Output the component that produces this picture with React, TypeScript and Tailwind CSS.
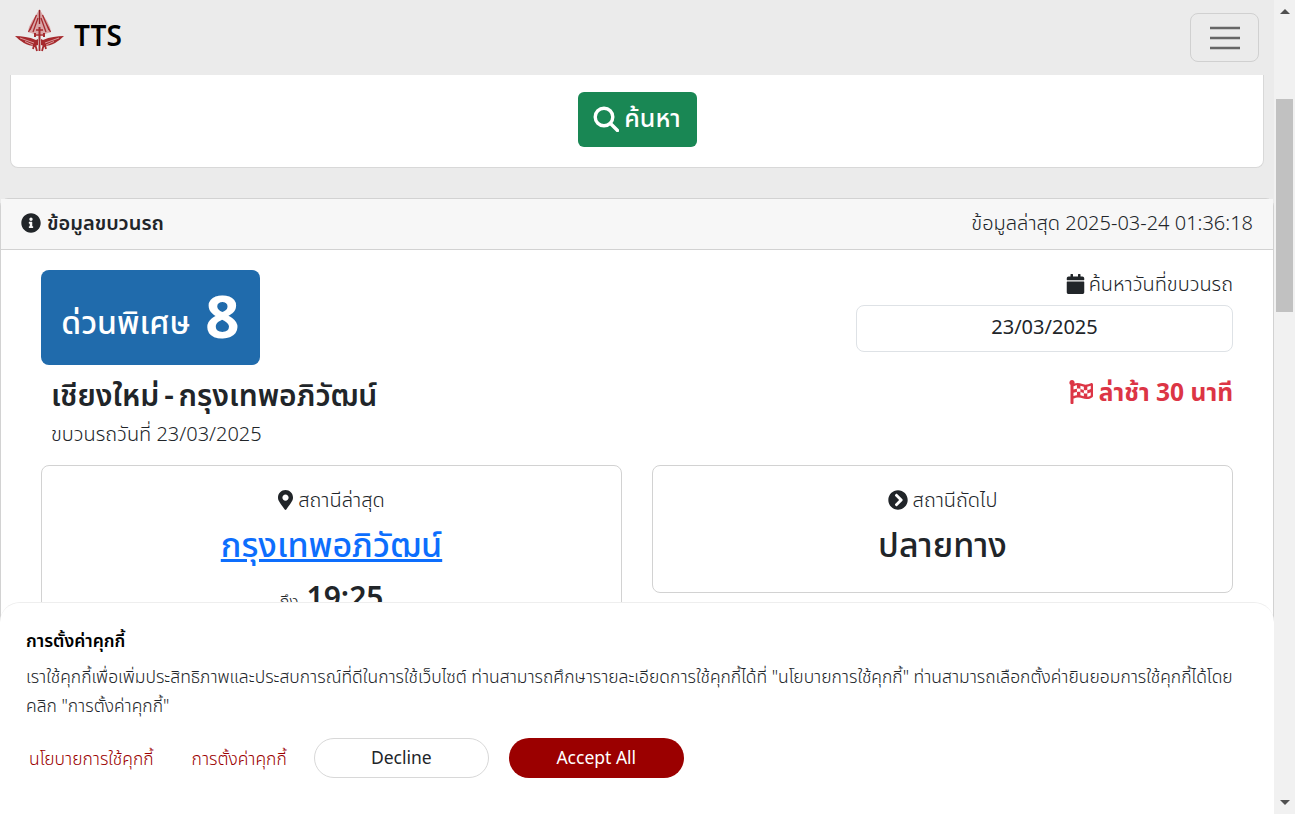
import React from "react";
import { FaInfoCircle, FaCalendar, FaFlagCheckered, FaMapMarkerAlt, FaChevronCircleRight } from "react-icons/fa";

function Logo() {
  return (
    <svg width="50" height="46" viewBox="0 0 50 46" className="block">
      <g fill="none" stroke="#a62a2e">
        <path d="M24.5 2 L28 8 L32 14 L35 20 L36 25 L30 27 L19 27 L13 25 L14 20 L17 14 L21 8 Z" fill="#d9a6a7" stroke="none" />
        <path d="M21.5 8 L15 23 M19 14 L13.5 25 M23 11 L18 25 M27.5 8 L34 23 M30 14 L35.5 25 M26 11 L31 25" strokeWidth="1.3" />
        <path d="M24.5 3 V17" strokeWidth="1.4" stroke="#8f1f23" />
        <path d="M21 23 H28 M19 28 H30" strokeWidth="1.6" />
        <path d="M20 26 V30 M24.5 20 V34 M29 26 V30" strokeWidth="2" />
        <path d="M0 29 C7 29 14 30 21 33 L23 32 V38 L20 39 C12 39 5 34 0 29 Z" fill="#a62a2e" stroke="none" />
        <path d="M49 29 C42 29 35 30 28 33 L26 32 V38 L29 39 C37 39 44 34 49 29 Z" fill="#a62a2e" stroke="none" />
        <path d="M20 37 L22 44 M24.5 34 V44 M29 37 L27 44 M19 38 L18 42 M30 38 L31 42" strokeWidth="1.8" />
        <path d="M5 31 L19 36 M10 34.5 L18 38 M44 31 L30 36 M39 34.5 L31 38" stroke="#e6b8b8" strokeWidth="0.8" />
      </g>
    </svg>
  );
}

export default function App() {
  return (
    <div className="relative flex h-[814px] w-[1295px] overflow-hidden bg-[#f1f1f1] font-['Noto_Sans','Noto_Sans_Thai','Open_Sans',sans-serif] text-[#212529]">
      <div className="flex h-[814px] w-[1274px] flex-col overflow-hidden bg-[#ebebeb]">
        <nav className="flex h-[75px] shrink-0 items-center justify-between pl-[15px] pr-[15px]">
          <div className="mb-[15px] flex items-center gap-[9px]">
            <Logo />
            <span className="mt-[10px] text-[28px] font-semibold leading-none text-black">TTS</span>
          </div>
          <button className="flex h-[49px] w-[69px] items-center justify-center rounded-[8px] border border-[#d0d0d0]">
            <svg width="30" height="24" viewBox="0 0 30 24" stroke="#666" strokeWidth="2.5">
              <path d="M0 2H30M0 12H30M0 22H30" />
            </svg>
          </button>
        </nav>

        <section className="mx-[10px] flex h-[93px] shrink-0 items-start justify-center rounded-b-[8px] border border-t-0 border-[#d8d8d8] bg-white pt-[17px]">
          <button className="flex h-[55px] w-[119px] items-center justify-center gap-[5px] rounded-[6px] bg-[#198754] pb-[3px] text-[25px] font-medium text-white">
            <svg width="26" height="26" viewBox="0 0 26 26" fill="none" stroke="currentColor" strokeWidth="3.4" strokeLinecap="round" className="mt-[1px]">
              <circle cx="11" cy="11" r="8.8" />
              <path d="M17.5 17.5 L24.5 24.5" />
            </svg>
            <span>ค้นหา</span>
          </button>
        </section>

        <section className="mt-[30px] flex-1 rounded-t-[8px] border border-[#d2d2d2] bg-white">
          <header className="flex h-[51px] items-center justify-between border-b border-[#d2d2d2] bg-[#f7f7f7] px-[20px] pb-[2px]">
            <div className="flex items-center gap-[6px] text-[20px] font-semibold">
              <FaInfoCircle className="h-[20px] w-[20px]" />
              <span>ข้อมูลขบวนรถ</span>
            </div>
            <span className="text-[20px] font-light">ข้อมูลล่าสุด 2025-03-24 01:36:18</span>
          </header>

          <div className="grid grid-cols-2 gap-x-[30px] px-[40px] pt-[20px]">
            <div>
              <div className="flex h-[95px] w-[219px] items-center justify-center gap-[15px] rounded-[8px] bg-[#206bac] text-white">
                <span className="mt-[8px] text-[32px] font-medium leading-none">ด่วนพิเศษ</span>
                <span className="mb-[5px] text-[60px] font-bold leading-none">8</span>
              </div>
              <h2 className="ml-[10px] mt-[10px] text-[30px] font-semibold leading-[40px] [word-spacing:-3px]">เชียงใหม่ - กรุงเทพอภิวัฒน์</h2>
              <p className="ml-[10px] mt-[6px] text-[20px] font-light leading-[26px]">ขบวนรถวันที่ 23/03/2025</p>
            </div>
            <div className="flex flex-col items-end">
              <div className="flex items-center gap-[4px] text-[20px] font-light leading-[28px]">
                <FaCalendar className="h-[20px] w-[19px]" />
                <span>ค้นหาวันที่ขบวนรถ</span>
              </div>
              <div className="mt-[7px] flex h-[47px] w-[377px] items-center justify-center rounded-[8px] border border-[#dee2e6] bg-white pb-[4px] text-[20px]">23/03/2025</div>
              <div className="mt-[22px] flex items-center gap-[6px] text-[24.6px] font-bold leading-[36px] text-[#dc3545]">
                <FaFlagCheckered className="h-[24px] w-[24px]" />
                <span>ล่าช้า 30 นาที</span>
              </div>
            </div>
            <div className="mt-[18px] flex h-[240px] flex-col items-center rounded-[8px] border border-[#d2d2d2] pt-[20px]">
              <div className="flex items-center gap-[5px] text-[20px] font-light leading-[28px]">
                <FaMapMarkerAlt className="h-[20px] w-[15px]" />
                <span>สถานีล่าสุด</span>
              </div>
              <a className="mt-[6px] text-[34px] font-medium leading-[48px] text-[#0d6efd] underline">กรุงเทพอภิวัฒน์</a>
              <div className="mt-[6px] flex items-baseline gap-[8px]">
                <span className="text-[17px] font-light">ถึง</span>
                <span className="text-[30px] font-semibold">19:25</span>
              </div>
            </div>
            <div className="mt-[18px] flex h-[128px] flex-col items-center rounded-[8px] border border-[#d2d2d2] pt-[20px]">
              <div className="flex items-center gap-[5px] text-[20px] font-light leading-[28px]">
                <FaChevronCircleRight className="h-[20px] w-[20px]" />
                <span>สถานีถัดไป</span>
              </div>
              <div className="mt-[6px] text-[34px] font-medium leading-[48px]">ปลายทาง</div>
            </div>
          </div>
        </section>
      </div>

      <div className="relative w-[21px] shrink-0 bg-[#f1f1f1]">
        <div className="absolute left-[6px] top-[9px] h-0 w-0 border-x-[5px] border-b-[5px] border-x-transparent border-b-[#505050]" />
        <div className="absolute left-[2px] top-[99px] h-[213px] w-[17px] bg-[#c1c1c1]" />
        <div className="absolute bottom-[9px] left-[6px] h-0 w-0 border-x-[5px] border-t-[5px] border-x-transparent border-t-[#505050]" />
      </div>

      <aside className="absolute bottom-0 left-0 h-[212px] w-[1274px] rounded-t-[20px] border-t border-[#eeeeee] bg-white pl-[26px] pr-[36px] pt-[24px]">
        <h3 className="text-[17.5px] font-semibold leading-[26px] text-black">การตั้งค่าคุกกี้</h3>
        <p className="mt-[9px] text-[17.5px] font-light leading-[29px]">เราใช้คุกกี้เพื่อเพิ่มประสิทธิภาพและประสบการณ์ที่ดีในการใช้เว็บไซต์ ท่านสามารถศึกษารายละเอียดการใช้คุกกี้ได้ที่ "นโยบายการใช้คุกกี้" ท่านสามารถเลือกตั้งค่ายินยอมการใช้คุกกี้ได้โดยคลิก "การตั้งค่าคุกกี้"</p>
        <div className="mt-[18px] flex items-center text-[17.5px] font-light">
          <a className="ml-[3px] text-[#9b0000]">นโยบายการใช้คุกกี้</a>
          <a className="ml-[38px] text-[#9b0000]">การตั้งค่าคุกกี้</a>
          <button className="ml-[27px] h-[40px] w-[175px] rounded-full border border-[#d8d8d8] bg-white pb-[2px] text-[17.5px] font-normal">Decline</button>
          <button className="ml-[20px] h-[40px] w-[175px] rounded-full bg-[#9b0000] pb-[2px] text-[17.5px] font-normal text-white">Accept All</button>
        </div>
      </aside>
    </div>
  );
}
